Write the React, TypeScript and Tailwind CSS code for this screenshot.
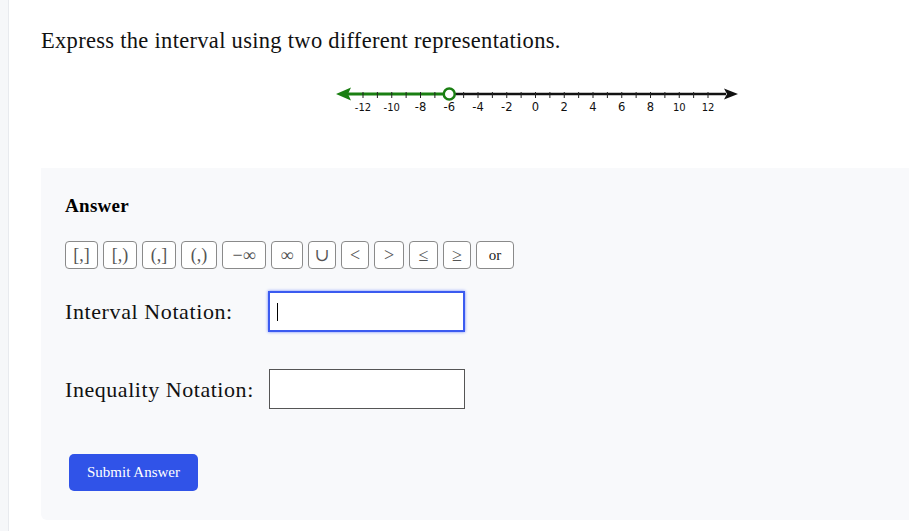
import { useEffect, useRef } from 'react';

const SERIF = "font-['Georgia','Liberation_Serif','DejaVu_Serif',serif]";

const buttons = ['[,]', '[,)', '(,]', '(,)', '−∞', '∞', '∪', '<', '>', '≤', '≥', 'or'];
const btnWidths = ['w-[33px]', 'w-[34px]', 'w-[34px]', 'w-[36px]', 'w-[44px]', 'w-[32px]', 'w-[28px]', 'w-[28px]', 'w-[30px]', 'w-[29px]', 'w-[28px]', 'w-[38px]'];

function NumberLine() {
  // 0 sits at x0, one unit is u px
  const x0 = 205.5;
  const u = 14.375;
  const ticks = Array.from({ length: 25 }, (_, i) => i - 12);
  const cx = x0 + -6 * u;
  return (
    <svg width="420" height="40" viewBox="0 0 420 40">
      <line x1={cx} y1="13" x2="396" y2="13" stroke="#111" strokeWidth="2.5" />
      <path d="M408 13 L394 7.5 L397 13 L394 18.5 Z" fill="#111" />
      <line x1="14" y1="13" x2={cx} y2="13" stroke="#1a7f12" strokeWidth="3" />
      <path d="M6 13 L21 6.5 L18 13 L21 19.5 Z" fill="#1a7f12" />
      {ticks.map((t) => (
        <line key={t} x1={x0 + t * u} y1="11" x2={x0 + t * u} y2="17" stroke="#222" strokeWidth="1" />
      ))}
      {ticks
        .filter((t) => t % 2 === 0)
        .map((t) => (
          <text
            key={t}
            x={x0 + t * u}
            y="30"
            textAnchor="middle"
            fontSize={Math.abs(t) >= 10 ? 10 : 11.5}
            fontFamily="'DejaVu Sans', 'Liberation Sans', sans-serif"
            fill="#111"
          >
            {t < 0 ? `-${-t}` : t}
          </text>
        ))}
      <circle cx={cx} cy="13" r="5.5" fill="#fff" stroke="#1a7f12" strokeWidth="2.5" />
    </svg>
  );
}

export default function App() {
  const ref = useRef<HTMLInputElement>(null);
  useEffect(() => {
    ref.current?.focus();
  }, []);

  return (
    <div className={`flex min-h-[531px] bg-white text-black ${SERIF}`}>
      <div className="w-[9px] shrink-0 bg-[#f6f7f9] border-r border-[#e8eaee]" />
      <div className="flex-1 pl-[32px] pt-[27px]">
        <h1 className="text-[22.5px] leading-[28px] tracking-[0.3px] text-[#111]">
          Express the interval using two different representations.
        </h1>
        <div className="mt-[26px] ml-[289px]">
          <NumberLine />
        </div>

        <div className="mt-[47px] bg-[#f8f9fb] rounded-bl-md pl-[24px] pt-[26px] pb-[28px] h-[352px]">
          <div className="text-[19px] font-bold leading-[24px] tracking-[0.3px]">Answer</div>
          <div className="mt-[23px] flex gap-[5px]">
            {buttons.map((b, i) => (
              <button
                key={b}
                className={`${btnWidths[i]} h-[28px] flex items-center justify-center border border-[#8a8a8a] rounded-[4px] bg-white leading-none ${
                  i === 11 ? 'text-[15px] text-[#222]' : i === 4 || i === 5 ? 'text-[18px] text-[#555]' : 'text-[18px] text-[#555]'
                }`}
              >
                {b}
              </button>
            ))}
          </div>

          <div className="mt-[22px] flex items-center">
            <label className="w-[203px] text-[22px] tracking-[0.6px] text-[#111]">Interval Notation:</label>
            <div className="relative">
              <input
                ref={ref}
                className="block w-[197px] h-[41px] border-2 border-[#3b5bf0] outline-none shadow-[0_0_3px_#6f86ff] px-[8px] bg-white text-[18px] caret-transparent"
              />
              <span className="pointer-events-none absolute left-[9px] top-[12px] w-px h-[18px] bg-black" />
            </div>
          </div>

          <div className="mt-[37px] flex items-center">
            <label className="w-[204px] text-[22px] tracking-[0.55px] text-[#111]">Inequality Notation:</label>
            <input className="w-[196px] h-[40px] border border-[#555] outline-none px-[8px] bg-white text-[18px]" />
          </div>

          <button className="mt-[45px] ml-[4px] w-[129px] h-[37px] rounded-[5px] bg-[#3053e8] text-white text-[15px]">
            Submit Answer
          </button>
        </div>
      </div>
    </div>
  );
}
